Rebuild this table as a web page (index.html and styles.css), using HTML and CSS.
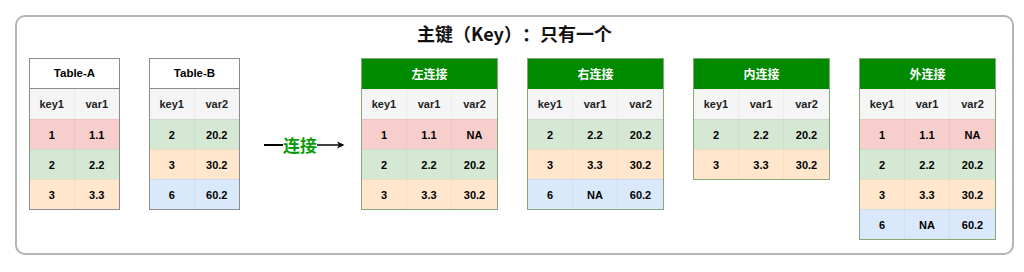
FILE: index.html
```html
<!DOCTYPE html>
<html lang="zh">
<head>
<meta charset="utf-8">
<title>主键（Key）：只有一个</title>
<link rel="stylesheet" href="styles.css">
</head>
<body>
<div class="frame">
  <div class="heading">主键（Key）：只有一个</div>
  <div class="stage">
    <div class="tbl plain cols2">
      <div class="cap">Table-A</div>
      <div class="row head"><span>key1</span><span>var1</span></div>
      <div class="row red"><span>1</span><span>1.1</span></div>
      <div class="row grn"><span>2</span><span>2.2</span></div>
      <div class="row org"><span>3</span><span>3.3</span></div>
    </div>
    <div class="tbl plain cols2 tb">
      <div class="cap">Table-B</div>
      <div class="row head"><span>key1</span><span>var2</span></div>
      <div class="row grn"><span>2</span><span>20.2</span></div>
      <div class="row org"><span>3</span><span>30.2</span></div>
      <div class="row blu"><span>6</span><span>60.2</span></div>
    </div>
    <div class="join">
      <span class="bar"></span><span class="jtext">连接</span><svg class="arr" width="28" height="10" viewBox="0 0 28 10"><line x1="0" y1="5" x2="22" y2="5" stroke="#000" stroke-width="1.5"/><path d="M20 1.5 L27.5 5 L20 8.5 L22 5 Z" fill="#000"/></svg>
    </div>
    <div class="tbl green cols3 first">
      <div class="cap">左连接</div>
      <div class="row head"><span>key1</span><span>var1</span><span>var2</span></div>
      <div class="row red"><span>1</span><span>1.1</span><span>NA</span></div>
      <div class="row grn"><span>2</span><span>2.2</span><span>20.2</span></div>
      <div class="row org"><span>3</span><span>3.3</span><span>30.2</span></div>
    </div>
    <div class="tbl green cols3">
      <div class="cap">右连接</div>
      <div class="row head"><span>key1</span><span>var1</span><span>var2</span></div>
      <div class="row grn"><span>2</span><span>2.2</span><span>20.2</span></div>
      <div class="row org"><span>3</span><span>3.3</span><span>30.2</span></div>
      <div class="row blu"><span>6</span><span>NA</span><span>60.2</span></div>
    </div>
    <div class="tbl green cols3">
      <div class="cap">内连接</div>
      <div class="row head"><span>key1</span><span>var1</span><span>var2</span></div>
      <div class="row grn"><span>2</span><span>2.2</span><span>20.2</span></div>
      <div class="row org"><span>3</span><span>3.3</span><span>30.2</span></div>
    </div>
    <div class="tbl green cols3">
      <div class="cap">外连接</div>
      <div class="row head"><span>key1</span><span>var1</span><span>var2</span></div>
      <div class="row red"><span>1</span><span>1.1</span><span>NA</span></div>
      <div class="row grn"><span>2</span><span>2.2</span><span>20.2</span></div>
      <div class="row org"><span>3</span><span>3.3</span><span>30.2</span></div>
      <div class="row blu"><span>6</span><span>NA</span><span>60.2</span></div>
    </div>
  </div>
</div>
</body>
</html>
```

FILE: styles.css
```css
html, body {
  margin: 0;
  padding: 0;
  background: #ffffff;
}
body {
  font-family: "Liberation Sans", Arial, "Noto Sans CJK SC", sans-serif;
  color: #000;
}
.frame {
  box-sizing: border-box;
  margin: 15px 0 0 15px;
  width: 999px;
  height: 240px;
  border: 2px solid #b4b4b4;
  border-radius: 10px;
  padding: 0 0 0 12px;
}
.heading {
  height: 32px;
  line-height: 32px;
  text-align: center;
  font-family: "Noto Sans CJK SC", sans-serif;
  font-weight: 700;
  font-size: 18px;
  color: #111;
  margin-left: -12px;
  text-spacing-trim: space-all;
}
.stage {
  display: flex;
  align-items: flex-start;
  margin-top: 9px;
}
.tbl {
  box-sizing: border-box;
  border: 1px solid #8a8a8a;
  font-weight: 700;
  font-size: 11px;
}
.cols2 { width: 91px; }
.cols3 { width: 137px; margin-left: 29px; }
.cols3.first { margin-left: 0; }
.tb { margin-left: 29px; }
.cap {
  height: 30px;
  line-height: 30px;
  text-align: center;
  font-size: 11.5px;
}
.plain { border-color: #8c8c8c; }
.plain .cap { background: #fff; border-bottom: 1px solid #8c8c8c; height: 29px; line-height: 29px; }
.green { border-color: #86a87a; }
.green .cap {
  background: #008a00;
  color: #fff;
  font-family: "Noto Sans CJK SC", sans-serif;
  font-size: 12px;
}
.row {
  display: grid;
  grid-auto-flow: column;
  grid-auto-columns: 1fr;
  height: 30px;
}
.row span {
  display: flex;
  align-items: center;
  justify-content: center;
  border-right: 1px solid rgba(0,0,0,0.04);
}
.row span:last-child { border-right: none; }
.row + .row { border-top: 1px solid rgba(0,0,0,0.05); height: 29px; }
.head { background: #f5f5f5; color: #222; }
.red { background: #f8cecc; }
.grn { background: #d5e8d4; }
.org { background: #ffe6cc; }
.blu { background: #dae8fc; }
.join {
  display: flex;
  align-items: center;
  height: 24px;
  margin: 75px 16px 0 24px;
}
.bar {
  display: block;
  width: 19px;
  height: 1.5px;
  background: #000;
}
.jtext {
  font-family: "Noto Sans CJK SC", sans-serif;
  font-weight: 700;
  font-size: 17px;
  color: #0a9a0a;
  line-height: 24px;
}
.arr { display: block; }
```
